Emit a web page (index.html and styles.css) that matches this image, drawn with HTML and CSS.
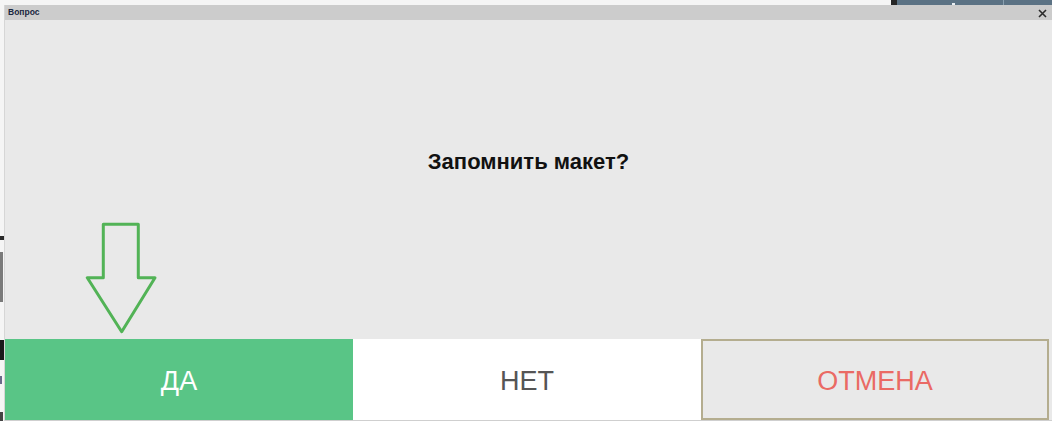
FILE: index.html
```html
<!DOCTYPE html>
<html lang="ru">
<head>
<meta charset="utf-8">
<title>Вопрос</title>
<link rel="stylesheet" href="styles.css">
</head>
<body>
<div class="desktop">
  <div class="bg-top">
    <div class="bg-dark"></div>
    <div class="bg-panel"><span class="bg-dot"></span><span class="bg-div"></span></div>
  </div>
  <div class="bg-left">
    <span class="m m1"></span>
    <span class="m m2"></span>
    <span class="m m3"></span>
    <span class="m m4"></span>
    <span class="m m5"></span>
  </div>
  <div class="dialog">
    <div class="titlebar">
      <span class="title">Вопрос</span>
      <svg class="close" width="9" height="9" viewBox="0 0 9 9"><path d="M1 1L8 8M8 1L1 8" stroke="#2b2b2b" stroke-width="1.6" fill="none"/></svg>
    </div>
    <div class="content">
      <div class="message">Запомнить макет?</div>
      <svg class="arrow" width="73" height="112" viewBox="0 0 73 112"><path d="M18.3 2.3H53.3V55.7H70L36.7 109.7L2.3 55.7H18.3Z" fill="none" stroke="#52b356" stroke-width="3" stroke-linejoin="round"/></svg>
    </div>
    <div class="buttons">
      <div class="btn yes">ДА</div>
      <div class="btn no">НЕТ</div>
      <div class="btn cancel">ОТМЕНА</div>
    </div>
  </div>
</div>
</body>
</html>
```

FILE: styles.css
```css
html, body {
  margin: 0;
  padding: 0;
}
body {
  background: #f5f5f5;
  font-family: "Liberation Sans", Arial, sans-serif;
  width: 1052px;
  height: 421px;
  overflow: hidden;
}
.desktop {
  position: relative;
  width: 1052px;
  height: 421px;
}
.bg-top {
  display: flex;
  justify-content: flex-end;
  height: 5px;
}
.bg-dark {
  width: 6px;
  background: #262626;
}
.bg-panel {
  position: relative;
  width: 155px;
  background: #5b7284;
}
.bg-dot {
  position: absolute;
  left: 55px;
  top: 3px;
  width: 3px;
  height: 2px;
  background: #e8eef2;
}
.bg-div {
  position: absolute;
  left: 106px;
  top: 0;
  width: 1px;
  height: 5px;
  background: #8aa0b0;
}
.bg-left {
  position: absolute;
  left: 0;
  top: 0;
  width: 4px;
  height: 421px;
}
.m {
  position: absolute;
  left: 0;
  display: block;
}
.m1 { top: 236px; width: 4px; height: 4px; background: #2a2a2a; }
.m2 { top: 252px; width: 3px; height: 50px; background: #7a7a7a; }
.m3 { top: 340px; width: 4px; height: 20px; background: #1a1a1a; }
.m4 { top: 376px; width: 2px; height: 8px; background: #6a6a8a; }
.m5 { top: 412px; width: 3px; height: 9px; background: #444; }
.dialog {
  position: absolute;
  left: 4px;
  top: 5px;
  width: 1048px;
  height: 416px;
  display: flex;
  flex-direction: column;
  background: #e9e9e9;
  border-left: 1px solid #d6d6d6;
  box-sizing: border-box;
}
.titlebar {
  height: 15px;
  background: #cccccc;
  display: flex;
  align-items: center;
  justify-content: space-between;
  padding: 0 5px 0 3px;
  flex: none;
}
.title {
  font-size: 8.5px;
  font-weight: bold;
  color: #1a2640;
  line-height: 15px;
}
.close {
  display: block;
  margin-top: 1px;
}
.content {
  position: relative;
  height: 319px;
  flex: none;
}
.message {
  position: absolute;
  left: 0;
  right: 0;
  top: 129px;
  text-align: center;
  font-size: 22px;
  font-weight: bold;
  color: #111;
}
.arrow {
  position: absolute;
  left: 80px;
  top: 202px;
}
.buttons {
  display: grid;
  grid-template-columns: 348px 348px 348px;
  height: 81px;
  border-bottom: 1px solid #cfcfcf;
  flex: none;
}
.btn {
  display: flex;
  align-items: center;
  justify-content: center;
  font-size: 27px;
  padding-top: 3px;
  box-sizing: border-box;
}
.yes {
  background: #59c586;
  color: #ffffff;
}
.no {
  background: #ffffff;
  color: #555555;
}
.cancel {
  background: #e9e9e9;
  color: #ea6a64;
  border: 2px solid #b4ad8f;
}
```
